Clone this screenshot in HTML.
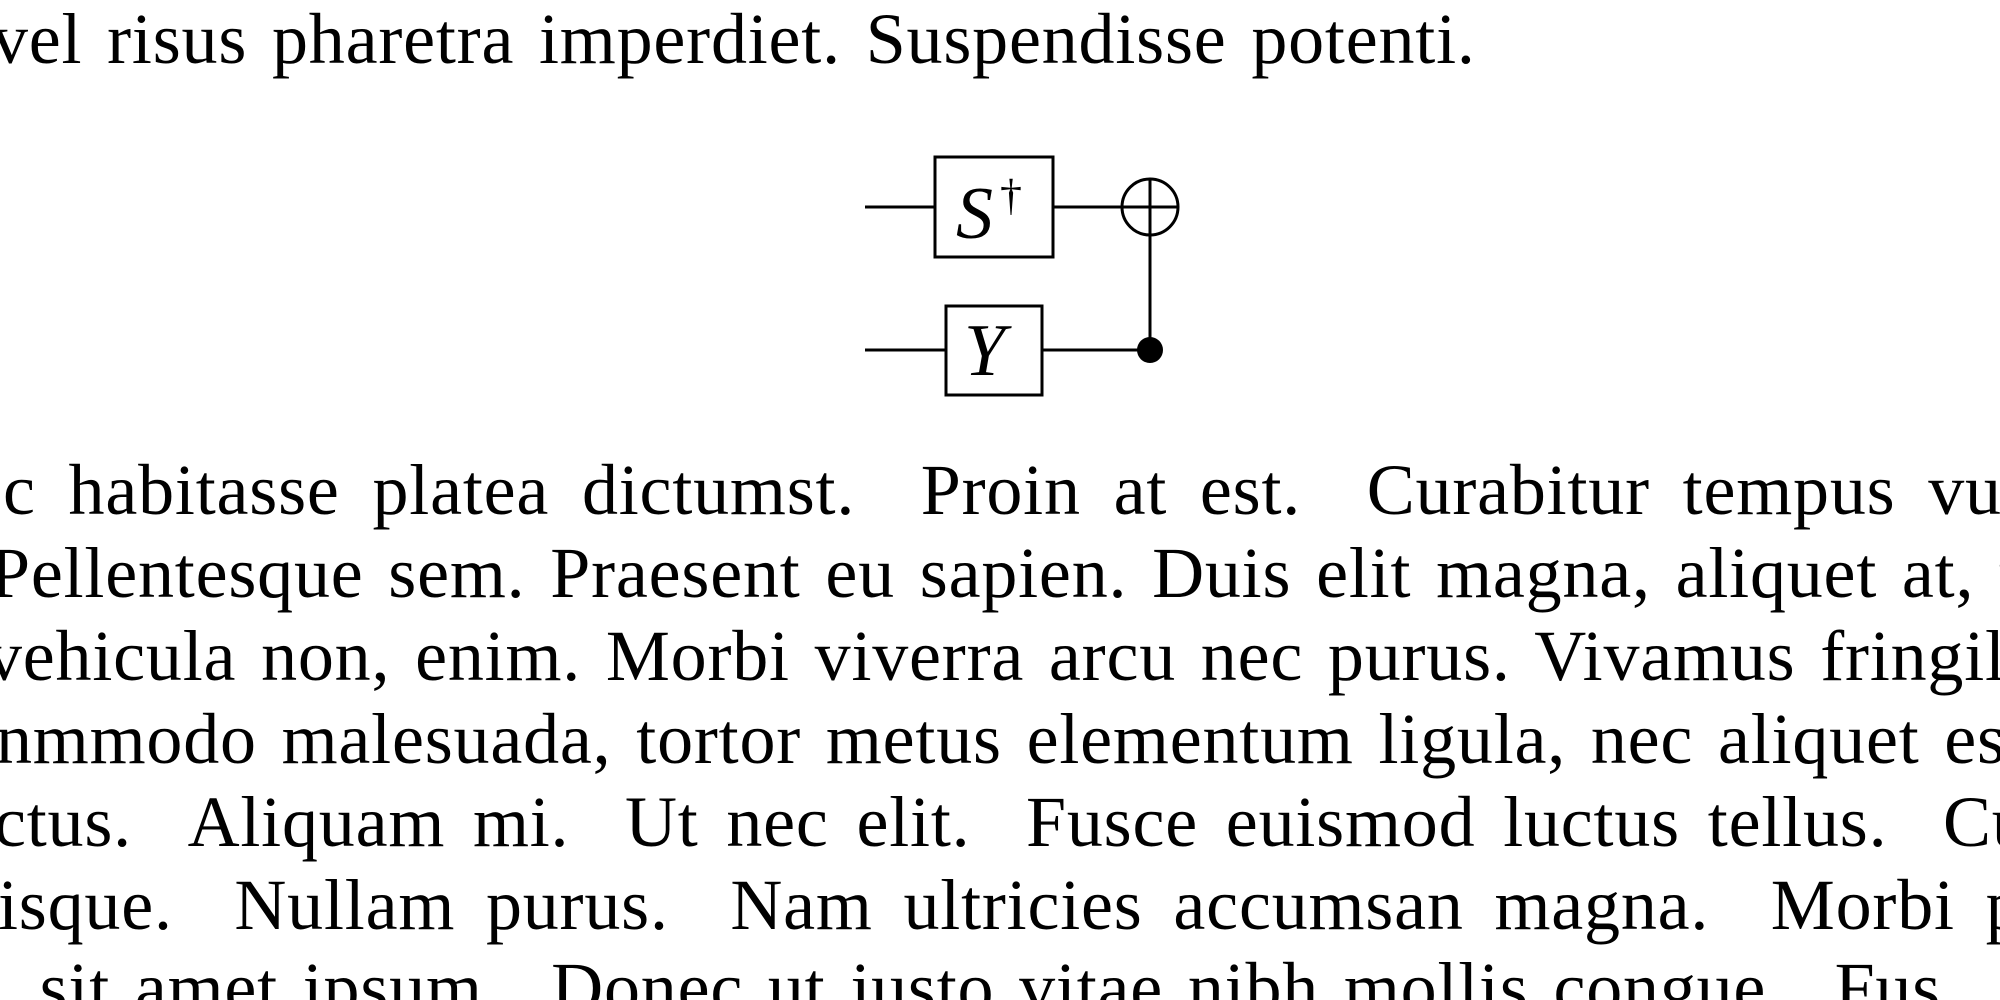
<!DOCTYPE html>
<html><head><meta charset="utf-8"><style>
html,body{margin:0;padding:0;background:#fff;width:2000px;height:1000px;overflow:hidden;position:relative}
.l{position:absolute;white-space:nowrap;font-family:"Liberation Serif",serif;font-size:72px;color:#000;line-height:1;letter-spacing:0.8px;word-spacing:6px}
</style></head><body>
<div class="l" style="left:-8px;top:3px">vel risus pharetra imperdiet. Suspendisse potenti.</div>
<svg style="position:absolute;left:0;top:0" width="2000" height="1000">
<g stroke="#000" stroke-width="3" fill="none">
<line x1="865" y1="207" x2="935" y2="207"/>
<rect x="935" y="157" width="118" height="100"/>
<line x1="1053" y1="207" x2="1178" y2="207"/>
<circle cx="1150" cy="207" r="28"/>
<line x1="1150" y1="179" x2="1150" y2="350"/>
<line x1="865" y1="350" x2="946" y2="350"/>
<rect x="946" y="306" width="96" height="89"/>
<line x1="1042" y1="350" x2="1150" y2="350"/>
</g>
<circle cx="1150" cy="350" r="13" fill="#000"/>
<text x="956" y="238" font-family="Liberation Serif" font-style="italic" font-size="74">S</text>
<text x="1000" y="210" font-family="Liberation Serif" font-size="44">†</text>
<text x="964" y="375" font-family="Liberation Serif" font-style="italic" font-size="74">Y</text>
</svg>
<div class="l" style="left:3px;top:454px;word-spacing:14px">c habitasse platea dictumst. &nbsp;Proin at est. &nbsp;Curabitur tempus vu</div>
<div class="l" style="left:-10px;top:537px">Pellentesque sem. Praesent eu sapien. Duis elit magna, aliquet at, t</div>
<div class="l" style="left:-14px;top:620px">vehicula non, enim. Morbi viverra arcu nec purus. Vivamus fringilla</div>
<div class="l" style="left:-4px;top:703px">nmmodo malesuada, tortor metus elementum ligula, nec aliquet est</div>
<div class="l" style="left:-6px;top:786px;word-spacing:9px">ctus. &nbsp;Aliquam mi. &nbsp;Ut nec elit. &nbsp;Fusce euismod luctus tellus. &nbsp;Cu</div>
<div class="l" style="left:-2px;top:869px;word-spacing:12px">isque. &nbsp;Nullam purus. &nbsp;Nam ultricies accumsan magna. &nbsp;Morbi p</div>
<div class="l" style="left:-4px;top:952px">, sit amet ipsum. &nbsp;Donec ut justo vitae nibh mollis congue. &nbsp;Fus</div>
</body></html>
